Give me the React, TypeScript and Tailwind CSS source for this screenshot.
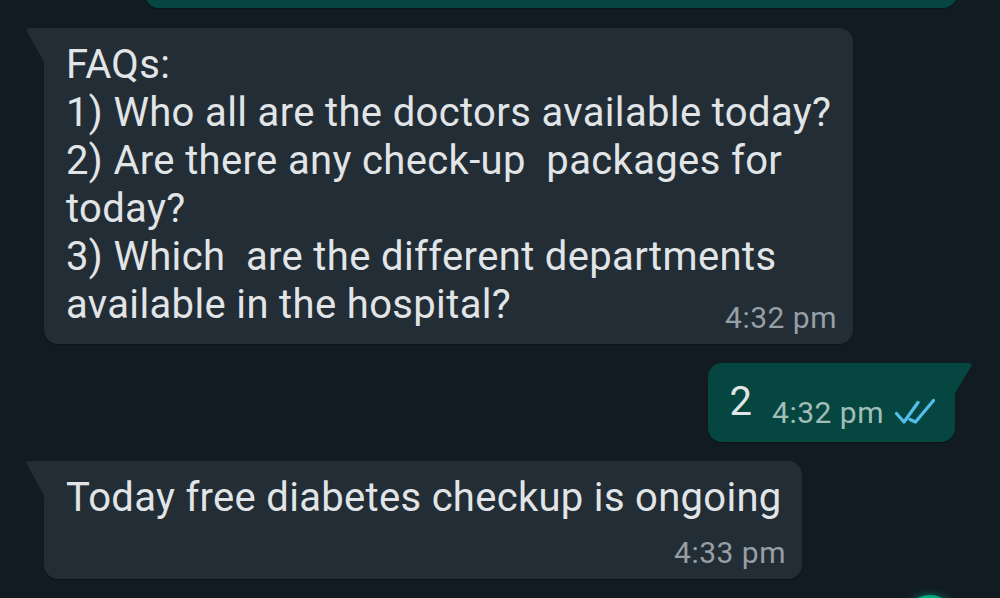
import React from 'react';

function InTail() {
  return (
    <svg className="absolute -left-[19px] top-0" width="20" height="36" viewBox="0 0 20 36">
      <path d="M20 0 H4 Q0 0 2 3.5 L20 36 Z" fill="#232d36" />
    </svg>
  );
}

function OutTail() {
  return (
    <svg className="absolute -right-[18px] top-0" width="19" height="32" viewBox="0 0 19 32">
      <path d="M0 0 H15 Q19 0 17 3.5 L0 32 Z" fill="#054740" />
    </svg>
  );
}

function DoubleTick() {
  return (
    <svg width="40" height="26" viewBox="0 0 40 26" className="block">
      <path d="M1.5 14.5 L9 23 L23 3.5" fill="none" stroke="#53bdeb" strokeWidth="3.2" strokeLinecap="round" strokeLinejoin="round" />
      <path d="M15 20.5 L20.5 23 L38.5 1.5" fill="none" stroke="#53bdeb" strokeWidth="3.2" strokeLinecap="round" strokeLinejoin="round" />
    </svg>
  );
}

export default function App() {
  return (
    <div
      className="relative w-full h-[598px] overflow-hidden bg-[#121b22] flex flex-col"
      style={{ fontFamily: 'Roboto, "Noto Sans", sans-serif' }}
    >
      {/* outgoing bubble cut off at the top */}
      <div className="self-end mr-[43px] -mt-[52px] w-[812px] h-[60px] rounded-b-[14px] bg-[#054740] shadow-[0_1px_1px_rgba(0,0,0,0.35)]" />

      {/* FAQ message */}
      <div className="relative mt-[20px] ml-[44px] w-[809px] rounded-[14px] rounded-tl-none bg-[#232d36] pt-[13px] pl-[22px] pr-[16px] pb-[10px] shadow-[0_1px_1px_rgba(0,0,0,0.35)]">
        <InTail />
        <div className="text-[40px] leading-[48px] tracking-[0.35px] text-[#e1e5e7] whitespace-pre-wrap">
          {'FAQs:\n1) Who all are the doctors available today?\n2) Are there any check-up  packages for\ntoday?\n3) Which  are the different departments\navailable in the hospital?'}
        </div>
        <div className="flex justify-end -mt-[27px]">
          <span className="text-[30px] leading-[32px] tracking-[0.5px] text-[#969fa5]">4:32 pm</span>
        </div>
      </div>

      {/* my reply */}
      <div className="relative self-end mt-[19px] mr-[45px] h-[79px] rounded-[14px] rounded-tr-none bg-[#054740] pt-[15px] pl-[22px] pr-[20px] flex items-start shadow-[0_1px_1px_rgba(0,0,0,0.35)]">
        <OutTail />
        <span className="text-[40px] leading-[48px] text-[#e1e5e7]">2</span>
        <span className="ml-[20px] mt-[19px] text-[30px] leading-[32px] tracking-[0.5px] text-[#a3bdb9]">4:32 pm</span>
        <span className="ml-[11px] mt-[21px]">
          <DoubleTick />
        </span>
      </div>

      {/* answer */}
      <div className="relative mt-[19px] ml-[44px] w-[758px] rounded-[14px] rounded-tl-none bg-[#232d36] pt-[13px] pl-[22px] pr-[16px] pb-[10px] shadow-[0_1px_1px_rgba(0,0,0,0.35)]">
        <InTail />
        <div className="text-[40px] leading-[48px] tracking-[0.3px] text-[#e1e5e7]">Today free diabetes checkup is ongoing</div>
        <div className="flex justify-end mt-[15px]">
          <span className="text-[30px] leading-[32px] tracking-[0.5px] text-[#969fa5]">4:33 pm</span>
        </div>
      </div>

      {/* fab peeking from below */}
      <div className="absolute right-[42px] -bottom-[53px] w-[56px] h-[56px] rounded-full bg-[#00a884] shadow-[0_0_8px_rgba(0,168,132,0.6)]" />
    </div>
  );
}
